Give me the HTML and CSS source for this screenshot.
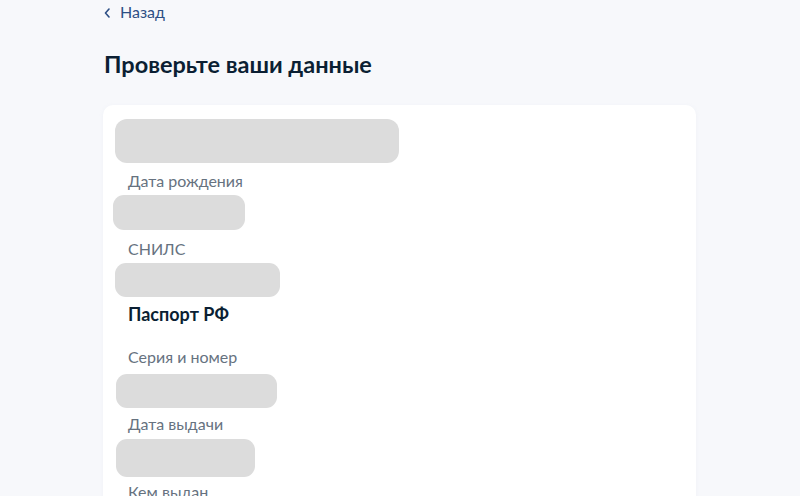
FILE: index.html
```html
<!DOCTYPE html>
<html lang="ru">
<head>
<meta charset="utf-8">
<title>Проверьте ваши данные</title>
<link rel="stylesheet" href="styles.css">
</head>
<body>
<div class="page">
  <a class="back" href="#">
    <svg class="chev" width="6" height="10" viewBox="0 0 6 10"><path d="M5 1 L1.5 5 L5 9" fill="none" stroke="currentColor" stroke-width="1.6" stroke-linecap="round" stroke-linejoin="round"/></svg>
    <span>Назад</span>
  </a>
  <h1 class="title">Проверьте ваши данные</h1>
  <div class="card">
    <div class="ph ph1"></div>
    <div class="label l1">Дата рождения</div>
    <div class="ph ph2"></div>
    <div class="label l2">СНИЛС</div>
    <div class="ph ph3"></div>
    <div class="section">Паспорт РФ</div>
    <div class="label l3">Серия и номер</div>
    <div class="ph ph4"></div>
    <div class="label l4">Дата выдачи</div>
    <div class="ph ph5"></div>
    <div class="label l5">Кем выдан</div>
  </div>
</div>
</body>
</html>
```
FILE: styles.css
```css
html, body {
  margin: 0;
  padding: 0;
}
body {
  background: #f7f8fb;
  font-family: Lato, "Noto Sans", sans-serif;
  color: #0b1f33;
  overflow: hidden;
  height: 496px;
}
.page {
  padding-left: 103px;
  width: 593px;
}
.back {
  display: flex;
  align-items: center;
  gap: 10px;
  height: 24px;
  padding-left: 1px;
  font-size: 16px;
  line-height: 24px;
  color: #2d4f85;
  text-decoration: none;
}
.chev {
  display: block;
  margin-top: 1px;
}
.title {
  margin: 24px 0 0 1px;
  font-size: 23.5px;
  line-height: 32px;
  font-weight: 700;
  color: #0b1f33;
}
.card {
  margin-top: 25px;
  background: #ffffff;
  border-radius: 10px;
  padding: 14px 0 40px 10px;
  box-shadow: 0 1px 4px rgba(180, 190, 210, 0.12);
}
.ph {
  background: #dcdcdc;
  border-radius: 12px;
}
.ph1 { width: 284px; height: 44px; margin-left: 2px; }
.ph2 { width: 132px; height: 35px; margin-top: 1px; border-radius: 11px; }
.ph3 { width: 165px; height: 34px; margin-top: 2px; margin-left: 2px; border-radius: 11px; }
.ph4 { width: 161px; height: 34px; margin-top: 5px; margin-left: 3px; border-radius: 11px; }
.ph5 { width: 139px; height: 38px; margin-top: 3px; margin-left: 3px; border-radius: 11px; }
.label {
  margin-left: 15px;
  font-size: 16px;
  line-height: 24px;
  color: #66727f;
}
.l1 { margin-top: 6px; }
.l2 { margin-top: 7px; }
.l3 { margin-top: 19px; }
.l4 { margin-top: 4px; }
.l5 { margin-top: 3px; }
.ph2 { margin-top: 2px; }
.section {
  margin: 5px 0 0 15px;
  font-size: 18px;
  line-height: 24px;
  font-weight: 700;
  color: #0b1f33;
}
```
